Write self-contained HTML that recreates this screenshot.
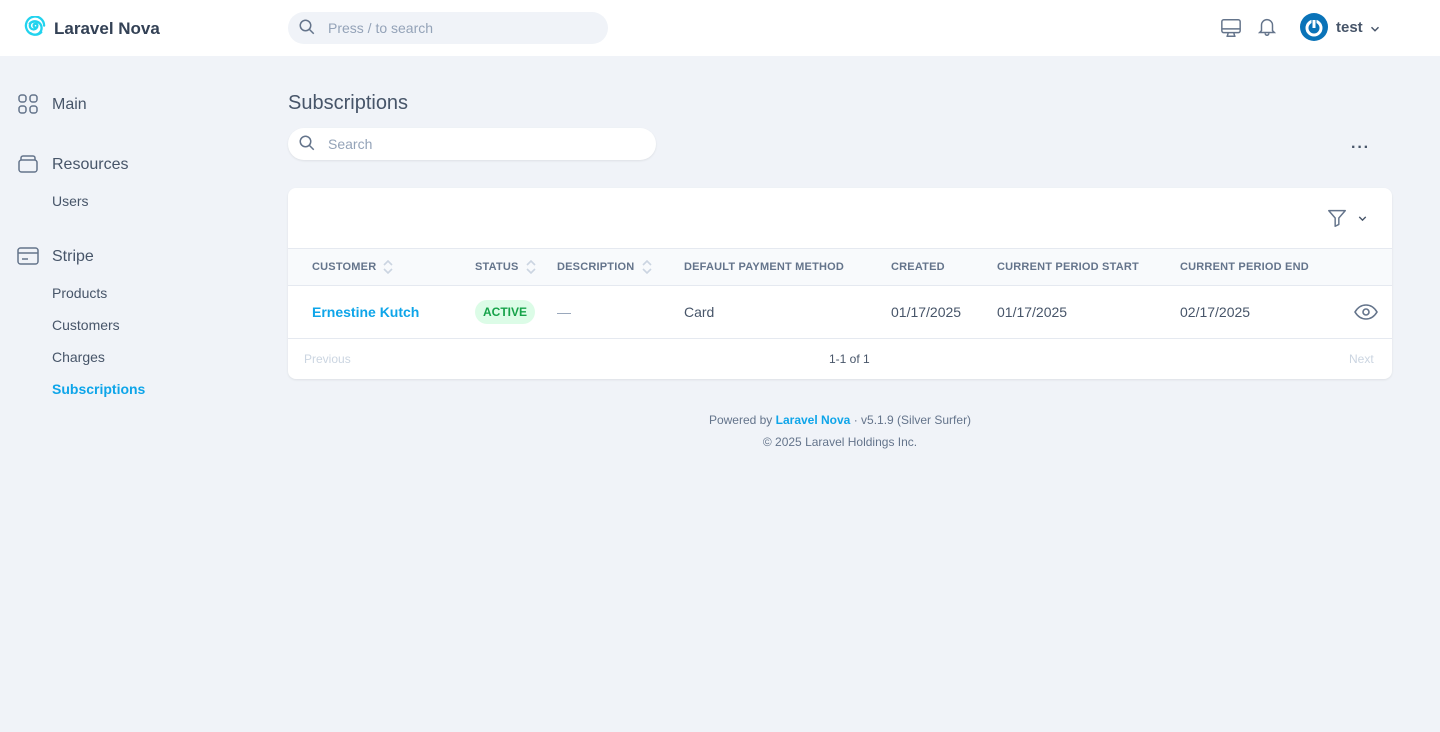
<!DOCTYPE html>
<html><head><meta charset="utf-8"><style>
*{box-sizing:border-box;margin:0;padding:0}
body{width:1440px;height:732px;background:#f0f3f8;font-family:"Liberation Sans",sans-serif;color:#475569;position:relative;overflow:hidden}
.abs{position:absolute}
.top{left:0;top:0;width:1440px;height:56px;background:#fff}
.gs{left:288px;top:12px;width:320px;height:32px;border-radius:16px;background:#f0f3f8}
.gs span{position:absolute;left:40px;top:8px;font-size:14px;color:#94a3b8}
.nav{font-size:16px;color:#475569}
.sub{font-size:14px;color:#475569}
.card{left:288px;top:188px;width:1104px;height:191px;background:#fff;border-radius:8px;box-shadow:0 1px 2px rgba(0,0,0,.08)}
.hd{position:absolute;top:261px;font-size:11px;font-weight:bold;color:#64748b;letter-spacing:.2px}
.cell{position:absolute;top:304px;font-size:14px;color:#475569}
</style></head><body>
<div class="abs top"></div>
<svg class="abs" style="left:24px;top:16px" width="23" height="23" viewBox="0 0 24 24" fill="none" stroke="#22d3ee" stroke-width="2.4" stroke-linecap="round"><path d="M12 12a2 2 0 1 1 2-2M14 10a4 4 0 1 1-4-4M6 8a7 7 0 1 1 1 10M18 17a9.5 9.5 0 1 1 3-7"/></svg>
<div class="abs" style="left:54px;top:19px;font-size:17px;font-weight:bold;color:#334155">Laravel Nova</div>
<div class="abs gs"><svg class="abs" style="left:10px;top:6px" width="18" height="18" viewBox="0 0 24 24" fill="none" stroke="#64748b" stroke-width="2"><circle cx="10" cy="10" r="7"/><path d="M15 15l6 6"/></svg><span>Press / to search</span></div>
<svg class="abs" style="left:1220px;top:17px" width="22" height="22" viewBox="0 0 24 24" fill="none" stroke="#64748b" stroke-width="1.6"><rect x="2" y="3" width="20" height="14" rx="2"/><path d="M2 13h20M9 17l-1 4h8l-1-4M7 21h10"/></svg>
<svg class="abs" style="left:1256px;top:16px" width="22" height="22" viewBox="0 0 24 24" fill="none" stroke="#64748b" stroke-width="1.6"><path d="M6 16V10a6 6 0 0 1 12 0v6l2 2H4zM10 19a2 2 0 0 0 4 0"/></svg>
<svg class="abs" style="left:1300px;top:13px" width="28" height="28" viewBox="0 0 28 28"><circle cx="14" cy="14" r="14" fill="#0a73b8"/><circle cx="14" cy="15" r="7" fill="none" stroke="#fff" stroke-width="3"/><path d="M14 6v9" stroke="#0a73b8" stroke-width="5"/><path d="M14 7v8" stroke="#fff" stroke-width="3"/></svg>
<div class="abs" style="left:1336px;top:19px;font-size:15px;font-weight:bold;color:#475569">test</div>
<svg class="abs" style="left:1368px;top:22px" width="14" height="14" viewBox="0 0 24 24" fill="none" stroke="#475569" stroke-width="2.5"><path d="M6 9l6 6 6-6"/></svg>

<svg class="abs" style="left:18px;top:94px" width="20" height="20" viewBox="0 0 20 20" fill="none" stroke="#64748b" stroke-width="1.5"><rect x="1" y="1" width="7" height="7" rx="2.5"/><rect x="12" y="1" width="7" height="7" rx="2.5"/><rect x="1" y="12" width="7" height="7" rx="2.5"/><rect x="12" y="12" width="7" height="7" rx="2.5"/></svg>
<div class="abs nav" style="left:52px;top:96px">Main</div>
<svg class="abs" style="left:18px;top:154px" width="20" height="20" viewBox="0 0 20 20" fill="none" stroke="#64748b" stroke-width="1.5"><rect x="1" y="6" width="18" height="12" rx="2.5"/><path d="M3 6V4a2 2 0 0 1 2-2h10a2 2 0 0 1 2 2v2"/></svg>
<div class="abs nav" style="left:52px;top:156px">Resources</div>
<div class="abs sub" style="left:52px;top:193px">Users</div>
<svg class="abs" style="left:17px;top:247px" width="22" height="18" viewBox="0 0 22 18" fill="none" stroke="#64748b" stroke-width="1.5"><rect x="1" y="1" width="20" height="16" rx="2.5"/><path d="M1 6h20M5 12h6"/></svg>
<div class="abs nav" style="left:52px;top:248px">Stripe</div>
<div class="abs sub" style="left:52px;top:285px">Products</div>
<div class="abs sub" style="left:52px;top:317px">Customers</div>
<div class="abs sub" style="left:52px;top:349px">Charges</div>
<div class="abs sub" style="left:52px;top:381px;color:#0ea5e9;font-weight:bold">Subscriptions</div>

<div class="abs" style="left:288px;top:92px;font-size:20px;color:#475569">Subscriptions</div>
<div class="abs" style="left:288px;top:128px;width:368px;height:32px;border-radius:16px;background:#fff;box-shadow:0 1px 2px rgba(0,0,0,.08)"><svg class="abs" style="left:10px;top:6px" width="18" height="18" viewBox="0 0 24 24" fill="none" stroke="#64748b" stroke-width="2"><circle cx="10" cy="10" r="7"/><path d="M15 15l6 6"/></svg><span class="abs" style="left:40px;top:8px;font-size:14px;color:#94a3b8">Search</span></div>
<div class="abs" style="left:1351px;top:139px;font-size:16px;font-weight:bold;color:#475569;letter-spacing:1px">···</div>

<div class="abs card"></div>
<svg class="abs" style="left:1326px;top:207px" width="22" height="22" viewBox="0 0 24 24" fill="none" stroke="#64748b" stroke-width="1.6" stroke-linejoin="round"><path d="M3 4h18l-7 8v7l-4 2v-9z"/></svg>
<svg class="abs" style="left:1356px;top:212px" width="13" height="13" viewBox="0 0 24 24" fill="none" stroke="#475569" stroke-width="2.5"><path d="M6 9l6 6 6-6"/></svg>
<div class="abs" style="left:288px;top:248px;width:1104px;height:38px;background:#f8fafc;border-top:1px solid #e5e9f0;border-bottom:1px solid #e5e9f0"></div>
<div class="hd" style="left:312px">CUSTOMER</div>
<div class="hd" style="left:475px">STATUS</div>
<div class="hd" style="left:557px">DESCRIPTION</div>
<div class="hd" style="left:684px">DEFAULT PAYMENT METHOD</div>
<div class="hd" style="left:891px">CREATED</div>
<div class="hd" style="left:997px">CURRENT PERIOD START</div>
<div class="hd" style="left:1180px">CURRENT PERIOD END</div>
<svg class="abs" style="left:382px;top:258px" width="12" height="18" viewBox="0 0 12 18" fill="none" stroke="#cbd5e1" stroke-width="1.6"><path d="M2 7l4-4 4 4M2 11l4 4 4-4"/></svg>
<svg class="abs" style="left:525px;top:258px" width="12" height="18" viewBox="0 0 12 18" fill="none" stroke="#cbd5e1" stroke-width="1.6"><path d="M2 7l4-4 4 4M2 11l4 4 4-4"/></svg>
<svg class="abs" style="left:641px;top:258px" width="12" height="18" viewBox="0 0 12 18" fill="none" stroke="#cbd5e1" stroke-width="1.6"><path d="M2 7l4-4 4 4M2 11l4 4 4-4"/></svg>
<div class="cell" style="left:312px;color:#0ea5e9;font-weight:bold">Ernestine Kutch</div>
<div class="abs" style="left:475px;top:300px;width:60px;height:24px;border-radius:12px;background:#dcfce7;color:#16a34a;font-size:12px;font-weight:bold;text-align:center;line-height:24px">ACTIVE</div>
<div class="cell" style="left:557px;color:#94a3b8">—</div>
<div class="cell" style="left:684px">Card</div>
<div class="cell" style="left:891px">01/17/2025</div>
<div class="cell" style="left:997px">01/17/2025</div>
<div class="cell" style="left:1180px">02/17/2025</div>
<svg class="abs" style="left:1354px;top:302px" width="24" height="20" viewBox="0 0 24 20" fill="none" stroke="#64748b" stroke-width="1.6"><path d="M1 10c3-5 7-7 11-7s8 2 11 7c-3 5-7 7-11 7S4 15 1 10z"/><circle cx="12" cy="10" r="3"/></svg>
<div class="abs" style="left:288px;top:338px;width:1104px;border-top:1px solid #e5e9f0"></div>
<div class="abs" style="left:304px;top:352px;font-size:12px;color:#cbd5e1">Previous</div>
<div class="abs" style="left:829px;top:352px;font-size:12px;color:#475569">1-1 of 1</div>
<div class="abs" style="left:1349px;top:352px;font-size:12px;color:#cbd5e1">Next</div>
<div class="abs" style="left:0;width:1680px;top:413px;text-align:center;font-size:12px;color:#64748b">Powered by <b style="color:#0ea5e9">Laravel Nova</b> · v5.1.9 (Silver Surfer)</div>
<div class="abs" style="left:0;width:1680px;top:435px;text-align:center;font-size:12px;color:#64748b">© 2025 Laravel Holdings Inc.</div>
</body></html>
